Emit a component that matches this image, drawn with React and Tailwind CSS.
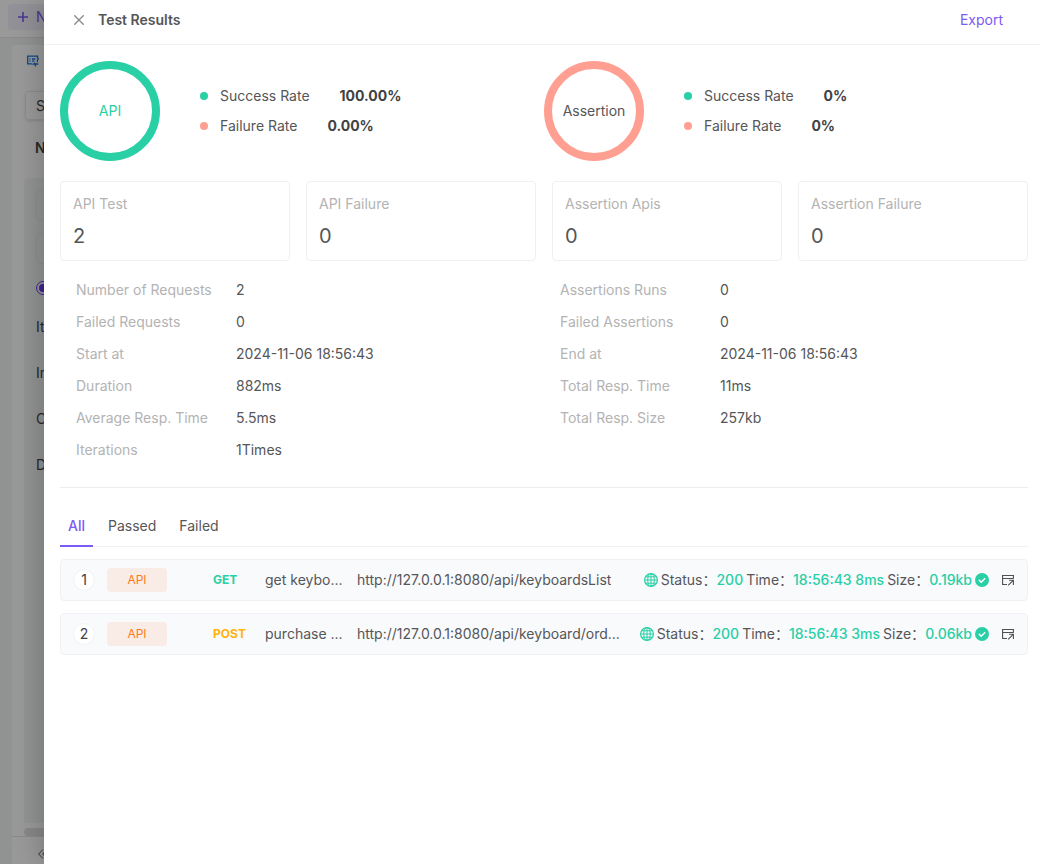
import React from "react";

const summaries = [
  { name: "API", ring: "border-[#29cfa5] text-[#29cfa5]", success: "100.00%", failure: "0.00%" },
  { name: "Assertion", ring: "border-[#ff9f92] text-[#555658]", success: "0%", failure: "0%" },
];

const cards = [
  { label: "API Test", value: "2" },
  { label: "API Failure", value: "0" },
  { label: "Assertion Apis", value: "0" },
  { label: "Assertion Failure", value: "0" },
];

const details = [
  [
    ["Number of Requests", "2"],
    ["Failed Requests", "0"],
    ["Start at", "2024-11-06 18:56:43"],
    ["Duration", "882ms"],
    ["Average Resp. Time", "5.5ms"],
    ["Iterations", "1Times"],
  ],
  [
    ["Assertions Runs", "0"],
    ["Failed Assertions", "0"],
    ["End at", "2024-11-06 18:56:43"],
    ["Total Resp. Time", "11ms"],
    ["Total Resp. Size", "257kb"],
  ],
];

const requests = [
  {
    id: 1,
    method: "GET",
    methodColor: "text-[#29cfa5]",
    name: "get keybo...",
    url: "http://127.0.0.1:8080/api/keyboardsList",
    duration: "8ms",
    size: "0.19kb",
  },
  {
    id: 2,
    method: "POST",
    methodColor: "text-[#ffb30f]",
    name: "purchase ...",
    url: "http://127.0.0.1:8080/api/keyboard/ord...",
    duration: "3ms",
    size: "0.06kb",
  },
];

function GlobeIcon() {
  return (
    <svg className="size-3.5 shrink-0 text-[#29cfa5]" viewBox="0 0 14 14" fill="none" stroke="currentColor" aria-hidden="true">
      <circle cx="7" cy="7" r="6.4" strokeWidth="1.2" />
      <ellipse cx="7" cy="7" rx="3.3" ry="6.4" />
      <path d="M7 .6v12.8M.6 7h12.8M1.6 3.8h10.8M1.6 10.2h10.8" />
    </svg>
  );
}

function CheckIcon() {
  return (
    <svg className="size-3.5 shrink-0" viewBox="0 0 14 14" fill="none" role="img" aria-label="Passed">
      <circle cx="7" cy="7" r="7" fill="#29cfa5" />
      <path d="M3.9 6.9l2.3 2.3 4-4" stroke="#fff" strokeWidth="1.5" />
    </svg>
  );
}

function OpenIcon() {
  return (
    <svg className="size-3" viewBox="0 0 12 12" fill="none" stroke="#4f5052" strokeWidth="1.1" aria-hidden="true">
      <path d="M5 10.5H.6V1.5h10.8v3.2M.6 4.5h10.8" />
      <path d="M6.2 11.4l5-5M7 6.3h4.4v4.6" />
    </svg>
  );
}

function Workspace() {
  return (
    <div className="flex h-screen flex-col bg-[#f0f5f3] text-sm text-[#444]" aria-hidden="true">
      <div className="flex h-[38px] shrink-0 items-start border-b border-[#e6e9e9] bg-white px-2 pt-1">
        <div className="flex h-[26px] w-9 items-center gap-2 overflow-hidden rounded-l bg-[#f4f2fc] px-2.5 text-[#7d5af5]">
          <svg className="size-2.5 shrink-0" viewBox="0 0 10 10" stroke="currentColor" strokeWidth="1.6">
            <path d="M5 0v10M0 5h10" />
          </svg>
          <span>N</span>
        </div>
      </div>
      <div className="mt-[7px] ml-3 flex grow flex-col rounded-tl bg-white">
        <div className="flex h-8 items-center pl-[15px]">
          <svg className="size-3" viewBox="0 0 12 12" fill="none" stroke="#1677e8" strokeWidth="1.3">
            <path d="M5.4 8.9H.7V1.2h10.6M2.4 4h1.2M5 4h3.4M2.4 6.2h1.2M5 6.2h2.4" />
            <path d="M10.4 1.2v1.6l1 1-1 1.4v2M8 7.6l-1.4 1.4h1.8v2.4M8 9h3.4" />
          </svg>
        </div>
        <div className="mt-3.5 ml-[13px] flex h-[29px] items-center rounded border border-[#eaeaea] pl-2.5 shadow-sm">S</div>
        <div className="mt-4 pl-[23px] text-sm leading-6 font-semibold">N</div>
        <div className="mt-[18px] ml-3 flex grow flex-col rounded-tl bg-[#f4f7f6] pt-3 pl-3">
          <div className="h-[31px] rounded-l border border-[#eaecec]" />
          <div className="mt-3 h-[31px] rounded-l border border-[#eaecec]" />
          <div className="mt-4 flex h-4 items-center">
            <span className="flex size-3.5 items-center justify-center rounded-full border border-[#6a3df0]">
              <span className="size-2 rounded-full bg-[#6a3df0]" />
            </span>
          </div>
          <div className="mt-5 flex flex-col gap-6 leading-[22px]">
            <span>It</span>
            <span>In</span>
            <span>C</span>
            <span>D</span>
          </div>
        </div>
        <div className="mt-[5px] ml-3 h-2 shrink-0 rounded-l bg-[#dfe3e6]" />
        <div className="flex h-7 shrink-0 items-center border-t border-[#e6e6e6] pt-1.5 pl-[26px]">
          <svg className="size-2.5" viewBox="0 0 10 10" fill="none" stroke="#555">
            <path d="M5 .5L.6 5 5 9.5M9 .5L4.6 5 9 9.5" />
          </svg>
        </div>
      </div>
    </div>
  );
}

function Summary({ name, ring, success, failure }) {
  return (
    <div className="flex items-center gap-10">
      <div className={`flex size-[100px] shrink-0 items-center justify-center rounded-full border-8 ${ring}`}>{name}</div>
      <ul className="leading-[30px]">
        <li className="flex items-center">
          <span className="mr-3 size-2 rounded-full bg-[#29cfa5]" />
          Success Rate
          <strong className="ml-[30px] font-bold text-[#404143]">{success}</strong>
        </li>
        <li className="flex items-center">
          <span className="mr-3 size-2 rounded-full bg-[#ff9f92]" />
          Failure Rate
          <strong className="ml-[30px] font-bold text-[#404143]">{failure}</strong>
        </li>
      </ul>
    </div>
  );
}

function RequestRow({ item }) {
  return (
    <li className="flex h-[42px] items-center rounded border border-[#f0f1f4] bg-[#f9fafc] pr-[13px] pl-3">
      <span className="flex size-[22px] shrink-0 items-center justify-center rounded-full border border-[#f2f3f5] bg-white text-[#404143]">
        {item.id}
      </span>
      <span className="ml-3 flex h-6 w-[60px] shrink-0 items-center justify-center rounded bg-[#f9ece7] text-xs text-[#ff7a1a]">
        API
      </span>
      <span className={`ml-[46px] w-[52px] shrink-0 text-xs font-bold ${item.methodColor}`}>{item.method}</span>
      <span className="w-20 shrink-0 truncate">{item.name}</span>
      <span className="mr-2 ml-3 min-w-0 truncate">{item.url}</span>
      <div className="ml-auto flex shrink-0 items-center gap-[3px] whitespace-nowrap">
        <GlobeIcon />
        <span>
          Status：<span className="font-medium text-[#29cfa5]">200</span>
        </span>
        <span>
          Time：<span className="font-medium text-[#29cfa5]">18:56:43 {item.duration}</span>
        </span>
        <span>
          Size：<span className="font-medium text-[#29cfa5]">{item.size}</span>
        </span>
        <CheckIcon />
      </div>
      <button type="button" aria-label="Open details" className="ml-[13px] shrink-0">
        <OpenIcon />
      </button>
    </li>
  );
}

export default function App() {
  return (
    <div className="relative min-h-screen overflow-hidden font-['Inter','Noto_Sans_CJK_SC',sans-serif] text-sm text-[#555658]">
      <Workspace />
      <div className="absolute inset-0 bg-black/40" />
      <section
        role="dialog"
        aria-label="Test Results"
        className="absolute inset-y-0 right-0 left-11 flex flex-col overflow-y-auto bg-white shadow-[-6px_0_24px_rgba(0,0,0,0.18)]"
      >
        <header className="flex items-center border-b border-[#f0f0f0] pt-2 pr-[37px] pb-3 pl-[30px] leading-6">
          <button type="button" aria-label="Close" className="mr-3.5">
            <svg className="size-2.5" viewBox="0 0 10 10" stroke="#8c8c8c" strokeWidth="1.4">
              <path d="M.3.3l9.4 9.4M9.7.3L.3 9.7" />
            </svg>
          </button>
          <h1 className="font-semibold">Test Results</h1>
          <button type="button" className="ml-auto text-[#7d5af5]">Export</button>
        </header>

        <main className="pt-4 pr-3 pl-4">
          <div className="grid grid-cols-2">
            {summaries.map((s) => (
              <Summary key={s.name} {...s} />
            ))}
          </div>

          <div className="mt-5 grid grid-cols-4 gap-4">
            {cards.map((c) => (
              <div key={c.label} className="rounded border border-[#f0f0f0] px-3 pt-2.5 pb-2">
                <div className="leading-6 text-[#b3b3b3]">{c.label}</div>
                <div className="mt-1 text-xl leading-8">{c.value}</div>
              </div>
            ))}
          </div>

          <div className="mt-[13px] grid grid-cols-2 border-b border-[#ececec] pb-[21px]">
            {details.map((column, i) => (
              <dl key={i} className="pl-4 leading-8">
                {column.map(([label, value]) => (
                  <div key={label} className="flex">
                    <dt className="w-40 text-[#b3b3b3]">{label}</dt>
                    <dd>{value}</dd>
                  </div>
                ))}
              </dl>
            ))}
          </div>

          <div role="tablist" className="mt-[18px] flex gap-[7px] border-b border-[#f0f0f0] leading-[22px]">
            <button type="button" role="tab" aria-selected="true" className="-mb-px border-b-2 border-[#7d5af5] px-2 pt-[9px] pb-2 font-medium text-[#7d5af5]">
              All
            </button>
            <button type="button" role="tab" aria-selected="false" className="-mb-px border-b-2 border-transparent px-2 pt-[9px] pb-2">
              Passed
            </button>
            <button type="button" role="tab" aria-selected="false" className="-mb-px border-b-2 border-transparent px-2 pt-[9px] pb-2">
              Failed
            </button>
          </div>

          <ul className="mt-3 flex flex-col gap-3">
            {requests.map((item) => (
              <RequestRow key={item.id} item={item} />
            ))}
          </ul>
        </main>
      </section>
    </div>
  );
}
